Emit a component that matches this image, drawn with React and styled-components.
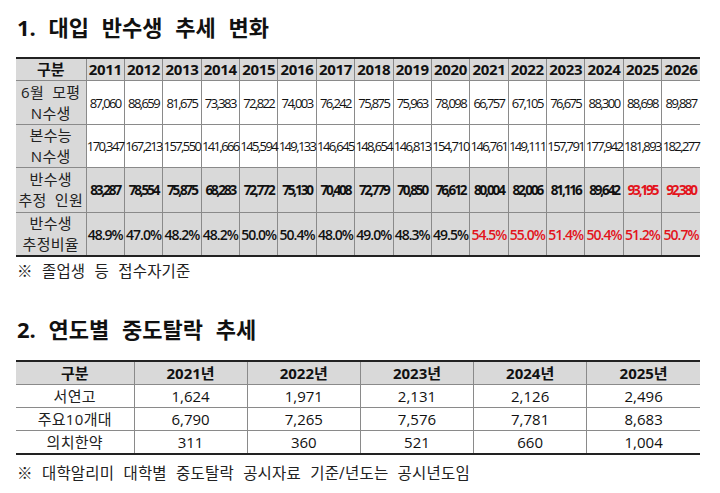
import React from "react";
import styled, { createGlobalStyle } from "styled-components";

const Global = createGlobalStyle`
  html, body { margin: 0; padding: 0; background: #fff; }
  body { font-family: "Open Sans", "Noto Sans CJK KR", sans-serif; color: #111; }
`;

const Page = styled.div`
  width: 684px;
  padding: 12px 20px 0 16px;
`;

const Title = styled.h2`
  margin: ${(p) => p.$margin || "0"};
  font-size: 22px;
  line-height: 30px;
  font-weight: 700;
  padding-left: 1px;
  word-spacing: 7px;
  color: #111;
`;

const Table = styled.table`
  width: 684px;
  border-collapse: collapse;
  table-layout: fixed;
  border-top: 2px solid #222;
  border-bottom: 2px solid #222;
`;

const Th = styled.th`
  background: #d9d9d9;
  font-weight: 700;
  font-size: ${(p) => p.$size || "15px"};
  letter-spacing: ${(p) => p.$ls || "0"};
  height: ${(p) => p.$h || "21px"};
  padding: 0;
  line-height: 1;
  text-align: center;
  white-space: nowrap;
  border-left: 1px solid #8a8a8a;
  &:first-child { border-left: none; }
`;

const Tr = styled.tr`
  height: ${(p) => p.$h};
  background: ${(p) => (p.$gray ? "#d9d9d9" : "#fff")};
`;

const Label = styled.td`
  background: ${(p) => (p.$white ? "#fff" : "#d9d9d9")};
  font-size: 15px;
  line-height: ${(p) => p.$lh || "21px"};
  text-align: center;
  padding: 0;
  word-spacing: 4px;
  letter-spacing: 0.3px;
  border-top: 1px solid #8a8a8a;
  color: #222;
`;

const Num = styled.td`
  font-size: ${(p) => p.$size || "13px"};
  font-weight: ${(p) => p.$weight || 400};
  letter-spacing: ${(p) => p.$ls || "-1.6px"};
  color: ${(p) => (p.$red ? "#e3141c" : "#111")};
  text-align: center;
  padding: 0;
  white-space: nowrap;
  overflow: visible;
  border-left: 1px solid #8a8a8a;
  border-top: 1px solid #8a8a8a;
`;

const Note = styled.p`
  margin: ${(p) => p.$margin || "0"};
  font-size: 15.5px;
  line-height: 20px;
  padding-left: 1px;
  word-spacing: 5px;
  letter-spacing: 0.2px;
  color: #222;
`;

const years1 = Array.from({ length: 16 }, (_, i) => 2011 + i);

const rows1 = [
  {
    label: ["6월  모평", "N수생"],
    h: "44px",
    vals: ["87,060","88,659","81,675","73,383","72,822","74,003","76,242","75,875","75,963","78,098","66,757","67,105","76,675","88,300","88,698","89,887"],
  },
  {
    label: ["본수능", "N수생"],
    h: "42px",
    vals: ["170,347","167,213","157,550","141,666","145,594","149,133","146,645","148,654","146,813","154,710","146,761","149,111","157,791","177,942","181,893","182,277"],
  },
  {
    label: ["반수생", "추정 인원"],
    h: "45px",
    gray: true,
    weight: 700,
    size: "13.5px",
    ls: "-2.1px",
    red: [14, 15],
    vals: ["83,287","78,554","75,875","68,283","72,772","75,130","70,408","72,779","70,850","76,612","80,004","82,006","81,116","89,642","93,195","92,380"],
  },
  {
    label: ["반수생", "추정비율"],
    h: "43px",
    gray: true,
    weight: 600,
    size: "14px",
    ls: "-1px",
    red: [10, 11, 12, 13, 14, 15],
    vals: ["48.9%","47.0%","48.2%","48.2%","50.0%","50.4%","48.0%","49.0%","48.3%","49.5%","54.5%","55.0%","51.4%","50.4%","51.2%","50.7%"],
  },
];

const years2 = ["2021년", "2022년", "2023년", "2024년", "2025년"];
const rows2 = [
  { label: "서연고", vals: ["1,624", "1,971", "2,131", "2,126", "2,496"] },
  { label: "주요10개대", vals: ["6,790", "7,265", "7,576", "7,781", "8,683"] },
  { label: "의치한약", vals: ["311", "360", "521", "660", "1,004"] },
];

export default function App() {
  return (
    <Page>
      <Global />
      <Title $margin="0 0 15px">1. 대입 반수생 추세 변화</Title>
      <Table>
        <colgroup>
          <col style={{ width: "70px" }} />
          {years1.map((y) => (
            <col key={y} />
          ))}
        </colgroup>
        <thead>
          <tr>
            <Th>구분</Th>
            {years1.map((y) => (
              <Th key={y} $ls="-0.3px">{y}</Th>
            ))}
          </tr>
        </thead>
        <tbody>
          {rows1.map((r, ri) => (
            <Tr key={ri} $h={r.h} $gray={r.gray}>
              <Label>
                {r.label[0]}
                <br />
                {r.label[1]}
              </Label>
              {r.vals.map((v, i) => (
                <Num
                  key={i}
                  $weight={r.weight}
                  $size={r.size}
                  $ls={r.ls}
                  $red={r.red && r.red.includes(i)}
                >
                  {v}
                </Num>
              ))}
            </Tr>
          ))}
        </tbody>
      </Table>
      <Note $margin="4px 0 0">※ 졸업생 등 접수자기준</Note>
      <Title $margin="33px 0 16px">2. 연도별 중도탈락 추세</Title>
      <Table>
        <colgroup>
          <col style={{ width: "118px" }} />
          {years2.map((y) => (
            <col key={y} />
          ))}
        </colgroup>
        <thead>
          <tr>
            <Th $h="22px">구분</Th>
            {years2.map((y) => (
              <Th key={y} $h="22px">{y}</Th>
            ))}
          </tr>
        </thead>
        <tbody>
          {rows2.map((r) => (
            <Tr key={r.label} $h="23px">
              <Label $white $lh="22px">{r.label}</Label>
              {r.vals.map((v, i) => (
                <Num key={i} $size="15px" $ls="0">
                  {v}
                </Num>
              ))}
            </Tr>
          ))}
        </tbody>
      </Table>
      <Note $margin="8px 0 0">※ 대학알리미 대학별 중도탈락 공시자료 기준/년도는 공시년도임</Note>
    </Page>
  );
}
